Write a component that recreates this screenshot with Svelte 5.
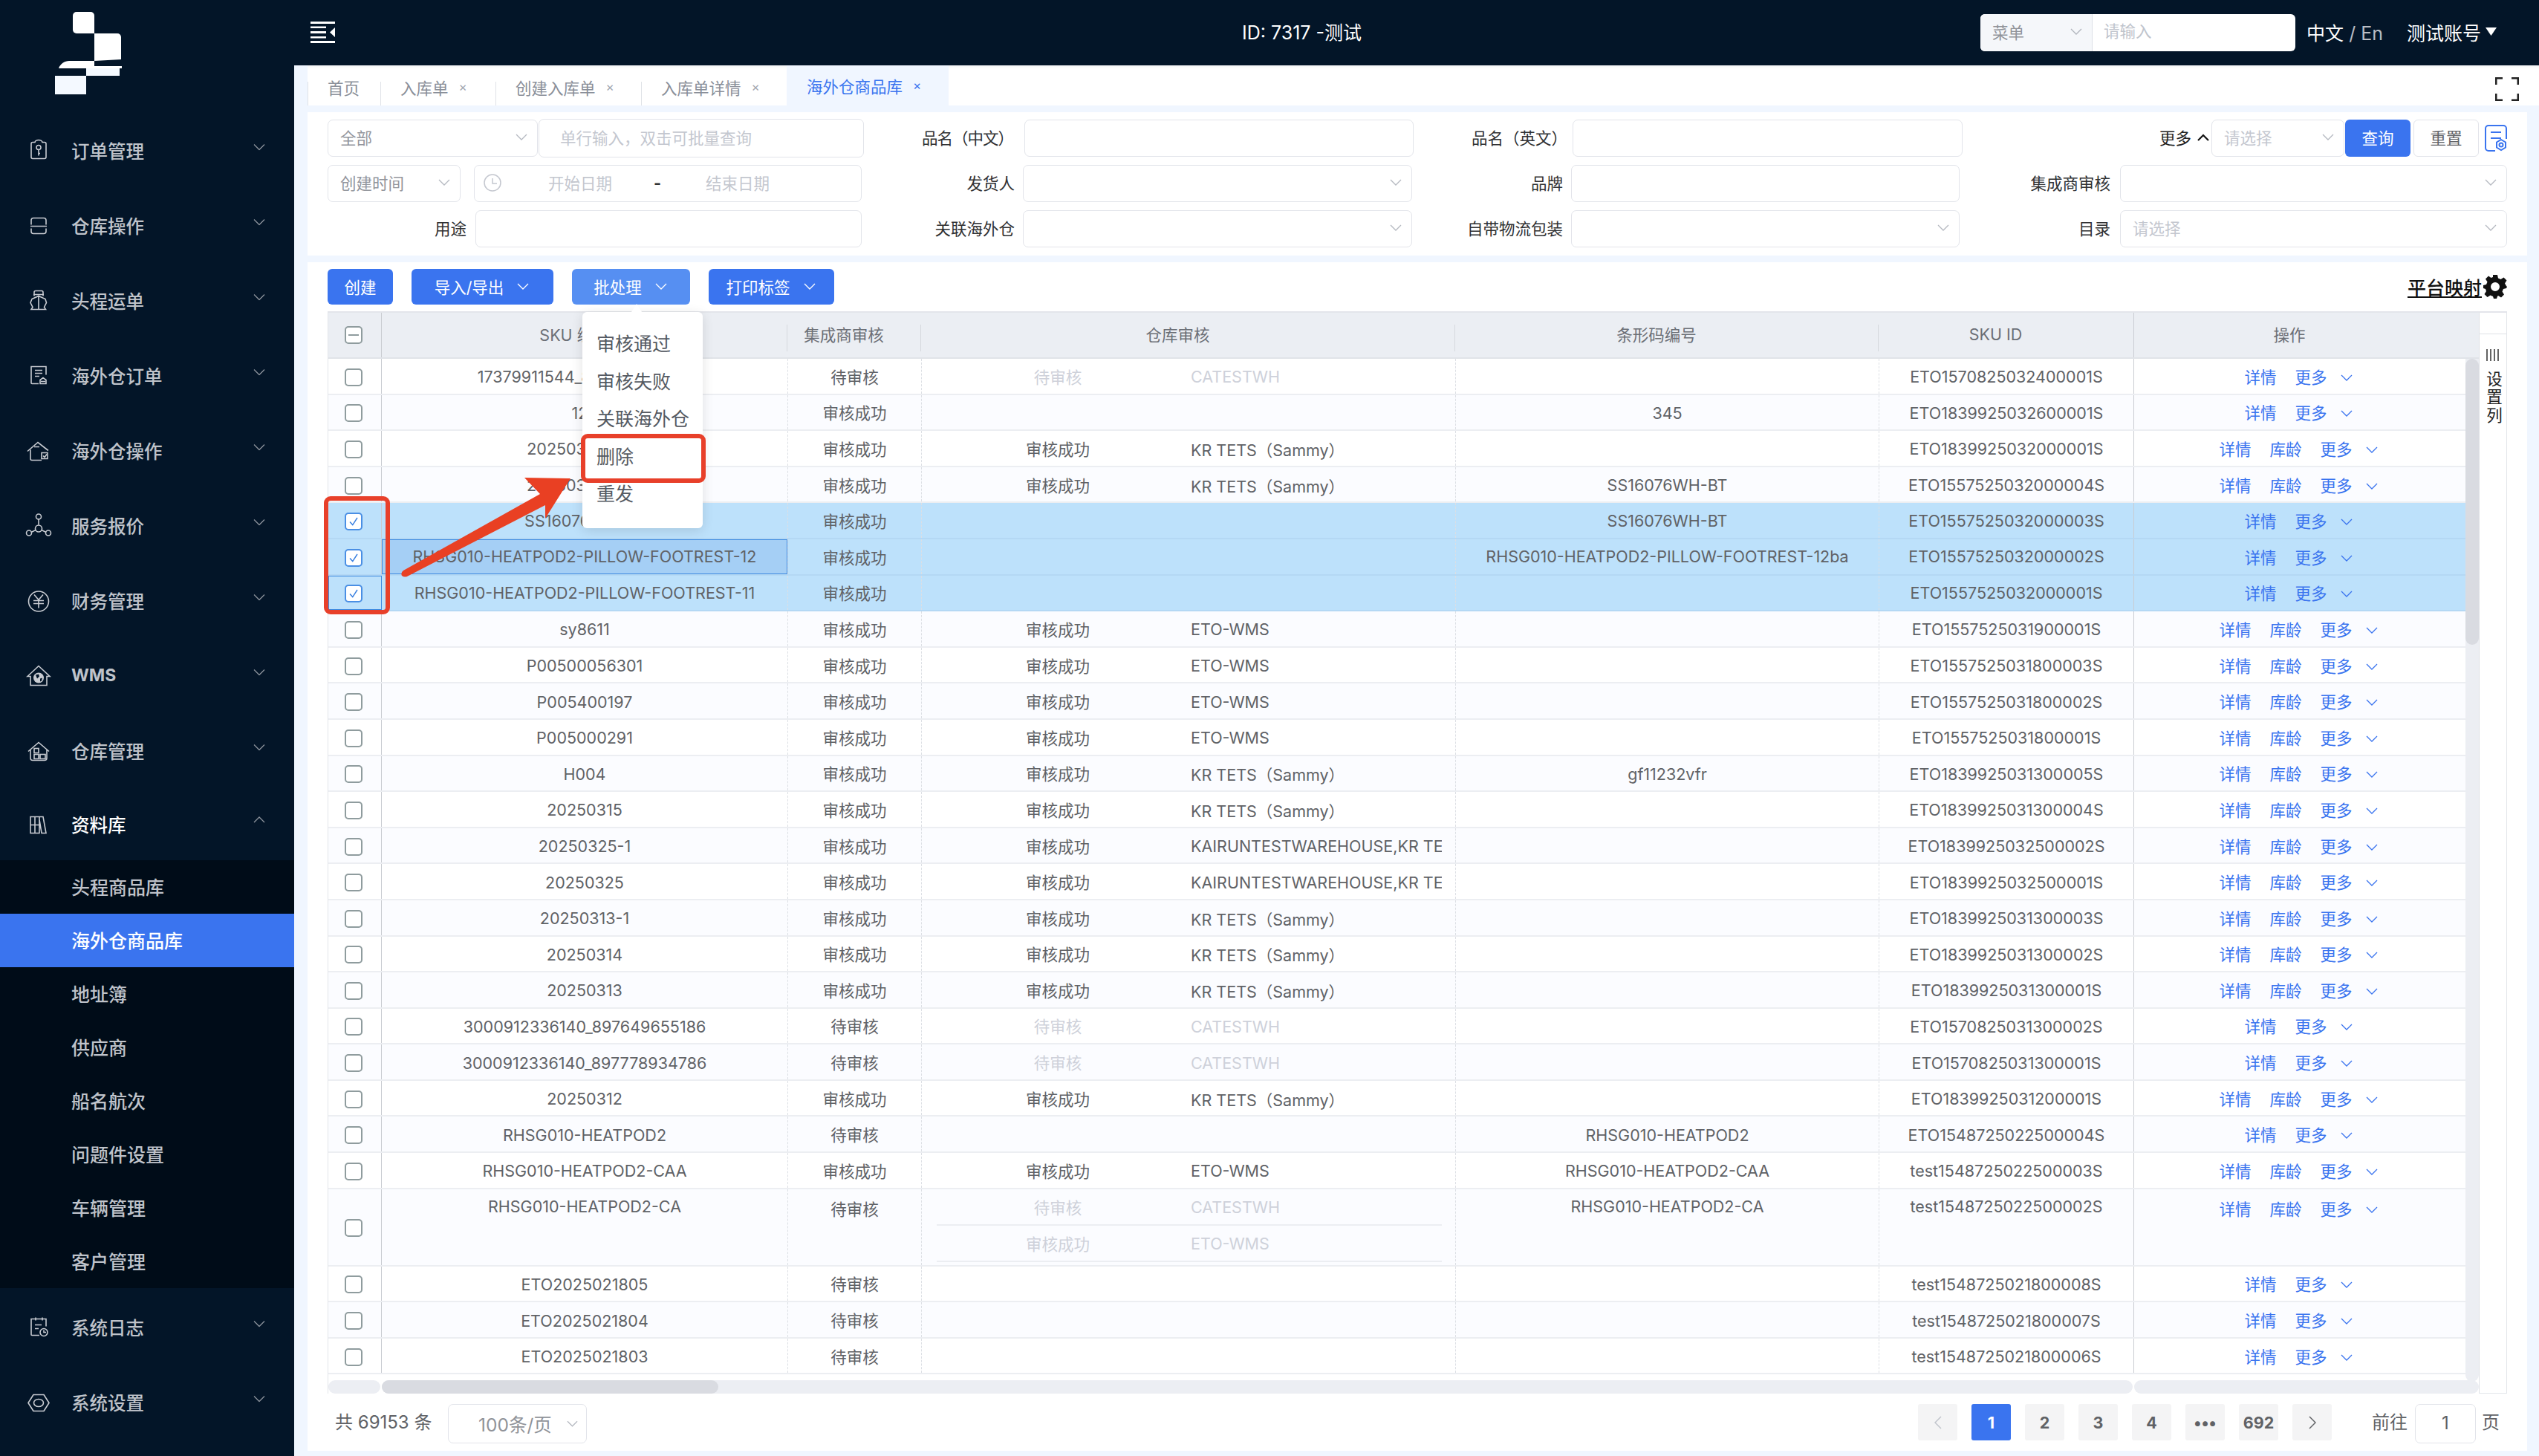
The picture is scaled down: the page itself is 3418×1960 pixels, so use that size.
<script>
  const menuTop = [
    { t: '订单管理', i: 'order' }, { t: '仓库操作', i: 'scan' }, { t: '头程运单', i: 'ship' },
    { t: '海外仓订单', i: 'doc' }, { t: '海外仓操作', i: 'house' }, { t: '服务报价', i: 'net' },
    { t: '财务管理', i: 'yen' }, { t: 'WMS', i: 'globe', bold: true }, { t: '仓库管理', i: 'store' }
  ];
  const subs = ['头程商品库', '海外仓商品库', '地址簿', '供应商', '船名航次', '问题件设置', '车辆管理', '客户管理'];
  const OK = '审核成功', WAIT = '待审核', KR = 'KR TETS（Sammy）', KA = 'KAIRUNTESTWAREHOUSE,KR TETS', E = 'ETO-WMS', C = 'CATESTWH';
  const rows = [
    ['17379911544_80000000000', WAIT, 'w', C, '', 'ETO1570825032400001S', 0],
    ['123', OK, '', '', '345', 'ETO1839925032600001S', 0],
    ['202503260001', OK, OK, KR, '', 'ETO1839925032000001S', 1],
    ['202503200001', OK, OK, KR, 'SS16076WH-BT', 'ETO1557525032000004S', 1],
    ['SS16076WH-BT', OK, '', '', 'SS16076WH-BT', 'ETO1557525032000003S', 0, 's'],
    ['RHSG010-HEATPOD2-PILLOW-FOOTREST-12', OK, '', '', 'RHSG010-HEATPOD2-PILLOW-FOOTREST-12ba', 'ETO1557525032000002S', 0, 's'],
    ['RHSG010-HEATPOD2-PILLOW-FOOTREST-11', OK, '', '', '', 'ETO1557525032000001S', 0, 's'],
    ['sy8611', OK, OK, E, '', 'ETO1557525031900001S', 1],
    ['P00500056301', OK, OK, E, '', 'ETO1557525031800003S', 1],
    ['P005400197', OK, OK, E, '', 'ETO1557525031800002S', 1],
    ['P005000291', OK, OK, E, '', 'ETO1557525031800001S', 1],
    ['H004', OK, OK, KR, 'gf11232vfr', 'ETO1839925031300005S', 1],
    ['20250315', OK, OK, KR, '', 'ETO1839925031300004S', 1],
    ['20250325-1', OK, OK, KA, '', 'ETO1839925032500002S', 1],
    ['20250325', OK, OK, KA, '', 'ETO1839925032500001S', 1],
    ['20250313-1', OK, OK, KR, '', 'ETO1839925031300003S', 1],
    ['20250314', OK, OK, KR, '', 'ETO1839925031300002S', 1],
    ['20250313', OK, OK, KR, '', 'ETO1839925031300001S', 1],
    ['3000912336140_897649655186', WAIT, 'w', C, '', 'ETO1570825031300002S', 0],
    ['3000912336140_897778934786', WAIT, 'w', C, '', 'ETO1570825031300001S', 0],
    ['20250312', OK, OK, KR, '', 'ETO1839925031200001S', 1],
    ['RHSG010-HEATPOD2', WAIT, '', '', 'RHSG010-HEATPOD2', 'ETO1548725022500004S', 0],
    ['RHSG010-HEATPOD2-CAA', OK, OK, E, 'RHSG010-HEATPOD2-CAA', 'test1548725022500003S', 1],
    ['RHSG010-HEATPOD2-CA', WAIT, 'tall', '', 'RHSG010-HEATPOD2-CA', 'test1548725022500002S', 1, 't'],
    ['ETO2025021805', WAIT, '', '', '', 'test1548725021800008S', 0],
    ['ETO2025021804', WAIT, '', '', '', 'test1548725021800007S', 0],
    ['ETO2025021803', WAIT, '', '', '', 'test1548725021800006S', 0]
  ];
  const pages = ['1', '2', '3', '4', '•••', '692'];
</script>

{#snippet chev(cls = '')}
  <svg class="chev {cls}" viewBox="0 0 16 9"><path d="M1 1l7 7 7-7" /></svg>
{/snippet}

{#snippet checkbox(kind = '')}
  <span class="cb {kind}">
    {#if kind === 'on'}<svg viewBox="0 0 24 24"><path d="M6 12.5l4.500 5L18 6" /></svg>{/if}
    {#if kind === 'half'}<i></i>{/if}
  </span>
{/snippet}

{#snippet icon(n)}
  <svg class="mi" viewBox="0 0 48 48">
    {#if n === 'order'}
      <path d="M19 12h-3a2 2 0 0 0-2 2v18a2 2 0 0 0 2 2h16a2 2 0 0 0 2-2V14a2 2 0 0 0-2-2h-3c-1-4-9-4-10 0z" /><circle cx="24" cy="19" r="3" /><path d="M24 22v8M24 27h2" />
    {:else if n === 'scan'}
      <path d="M14 22v-6a3 3 0 0 1 3-3h14a3 3 0 0 1 3 3v6M14 27v4a3 3 0 0 0 3 3h14a3 3 0 0 0 3-3v-4M13 24h22" />
    {:else if n === 'ship'}
      <path d="M18 17v-5a2 2 0 0 1 2-2h8a2 2 0 0 1 2 2v5M15 21l9-4 9 4 1.500 5-3 6 2 3H14l2-3-3-6zM24 17v18M17 15h14" />
    {:else if n === 'doc'}
      <path d="M24 34h-9a1 1 0 0 1-1-1V11h20v11M19 16h10M19 20h10M19 24h6" /><path d="M26 34v-5l4-3 4 3v5zM27 31h6" />
    {:else if n === 'house'}
      <path d="M9 24l14-12 14 11M13 22v12a2 2 0 0 0 2 2h13M18 18h7" /><path d="M28 26h8v8h-8z" /><path d="M30 30l2 2 3-4" />
    {:else if n === 'net'}
      <circle cx="24" cy="11" r="3.500" /><circle cx="24" cy="27" r="4.500" /><circle cx="11" cy="33" r="3.500" /><circle cx="37" cy="33" r="3.500" /><path d="M24 14v8M20 29l-6 3M28 29l6 3" />
    {:else if n === 'yen'}
      <circle cx="24" cy="24" r="13.500" /><path d="M18 15l6 7 6-7M24 22v11M17 23h14M17 27h14" />
    {:else if n === 'globe'}
      <path d="M9 24L24 10l15 14h-4v12H13V24z" /><circle class="solid" cx="24" cy="26" r="7" /><path class="land" d="M20 22l4-1 1 3-3 3zM26 27l3-1-1 4-2 1z" />
    {:else if n === 'store'}
      <path d="M10 24l14-12 14 12M13 22v11a3 3 0 0 0 3 3h16a3 3 0 0 0 3-3V22" /><rect x="18" y="20" width="6" height="6" /><rect x="18" y="28" width="6" height="6" /><rect x="26" y="28" width="7" height="6" />
    {:else if n === 'books'}
      <path d="M13 13h6v22h-6zM19 13h6v22h-6zM13 24h12M25 13h5l4 22h-6l-3-18" />
    {:else if n === 'log'}
      <path d="M25 34H15a1 1 0 0 1-1-1V12h6M20 10v4M29 10v4M20 12h9M29 12h5v10M19 20h9M19 25h5" /><circle cx="31" cy="30" r="5" /><path d="M31 27v3h3" />
    {:else if n === 'gear'}
      <path d="M17 13h14l7 11-7 11H17L10 24z" stroke-linejoin="round" /><ellipse cx="24" cy="24" rx="6.500" ry="5" />
    {/if}
  </svg>
{/snippet}

<div class="app">
  <aside class="side">
    <svg class="logo" viewBox="0 0 396 153">
      <path fill="#fff" d="M98 21a5 5 0 0 1 5-5h19a5 5 0 0 1 5 5v24h-24a5 5 0 0 1-5-5z" />
      <path fill="#fff" d="M127 45h31a5 5 0 0 1 5 5v30l-36 2z" />
      <path fill="#fff" d="M79 92c2-6 8-10 14-10h34v7h37v3z" />
      <path fill="#f4f9ff" d="M116 92h45v10h-45z" />
      <path fill="#f4f9ff" d="M74 102h42v25H74z" />
    </svg>
    <nav>
      {#each menuTop as m}
        <div class="item">
          {@render icon(m.i)}
          <span class:bold={m.bold}>{m.t}</span>
          {@render chev()}
        </div>
      {/each}
      <div class="item open">
        {@render icon('books')}
        <span>资料库</span>
        {@render chev('up')}
      </div>
      <div class="sub">
        {#each subs as s, i}
          <div class="subitem" class:act={i === 1}>{s}</div>
        {/each}
      </div>
      <div class="item after">{@render icon('log')}<span>系统日志</span>{@render chev()}</div>
      <div class="item">{@render icon('gear')}<span>系统设置</span>{@render chev()}</div>
    </nav>
  </aside>

  <div class="main">
    <header class="top">
      <svg class="burger" viewBox="0 0 33 29"><path d="M0 0h33v3H0zM0 13h21v3H0zM0 26h33v3H0zM33 8v13l-7-6.500z" fill="#fff" /><path d="M0 6.500h21v2.500H0zM0 20h21v2.500H0z" fill="#fff" /></svg>
      <div class="title">ID: 7317 -测试</div>
      <div class="topright">
        <div class="search">
          <div class="s-sel"><span>菜单</span>{@render chev()}</div>
          <div class="s-in">请输入</div>
        </div>
        <div class="lang">中文 <em>/ En</em></div>
        <div class="acct">测试账号<svg viewBox="0 0 15 11"><path d="M0 0h15L7.500 11z" /></svg></div>
      </div>
    </header>

    <div class="content">
      <div class="tabs">
        <div class="tab home">首页</div>
        <div class="tab t2">入库单<i>×</i></div>
        <div class="tab t3">创建入库单<i>×</i></div>
        <div class="tab t3">入库单详情<i>×</i></div>
        <div class="tab active">海外仓商品库<i>×</i></div>
        <svg class="fs" viewBox="0 0 32 32"><path d="M1 10V1h9M22 1h9v9M31 22v9h-9M10 31H1v-9" /></svg>
      </div>

      <section class="filters">
        <div class="frow">
          <div class="f w283 val">全部{@render chev()}</div>
          <div class="f w438 ml1 ph tall">单行输入，双击可批量查询</div>
          <label class="l w191 tight">品名（中文）</label>
          <div class="f w524 ml25"></div>
          <label class="l w197 tight loose">品名（英文）</label>
          <div class="f w525 ml17"></div>
          <div class="rightblock">
            <span class="more">更多<svg viewBox="0 0 16 10"><path d="M1 9l7-7 7 7" /></svg></span>
            <div class="f w179 ph">请选择{@render chev()}</div>
            <button class="btn pri">查询</button>
            <button class="btn def">重置</button>
            <svg class="cfg" viewBox="0 0 30 36"><path d="M14 35H5a4 4 0 0 1-4-4V5a4 4 0 0 1 4-4h20a4 4 0 0 1 4 4v14M8 10h14M8 18h14" /><path d="M22 20l6 3.500v7L22 34l-6-3.500v-7z" /><circle cx="22" cy="27" r="2.500" /></svg>
          </div>
        </div>
        <div class="frow">
          <div class="f w179 val">创建时间{@render chev()}</div>
          <div class="f w522 ml18 date">
            <svg class="clock" viewBox="0 0 24 24"><circle cx="12" cy="12" r="11" /><path d="M12 6v7h6" /></svg>
            <span class="d1">开始日期</span><span class="dash">-</span><span class="d2">结束日期</span>
          </div>
          <label class="l w206">发货人</label>
          <div class="f w524 ml11">{@render chev()}</div>
          <label class="l w203">品牌</label>
          <div class="f w523 ml11"></div>
          <label class="l w203">集成商审核</label>
          <div class="f w521 ml13">{@render chev()}</div>
        </div>
        <div class="frow">
          <label class="l w187">用途</label>
          <div class="f w520 ml12"></div>
          <label class="l w206">关联海外仓</label>
          <div class="f w524 ml11">{@render chev()}</div>
          <label class="l w203">自带物流包装</label>
          <div class="f w523 ml11">{@render chev()}</div>
          <label class="l w203">目录</label>
          <div class="f w521 ml13 ph">请选择{@render chev()}</div>
        </div>
      </section>

      <section class="panel">
        <div class="toolbar">
          <button class="tb b1">创建</button>
          <button class="tb b2">导入/导出{@render chev()}</button>
          <button class="tb b3">批处理{@render chev()}</button>
          <button class="tb b4">打印标签{@render chev()}</button>
          <span class="map"><u>平台映射</u>
            <svg viewBox="0 0 32 32"><path fill-rule="evenodd" d="M13 0h6l1 4.500 3.500 1.500 4-2.500 4 4-2.500 4L31 15l1 1v0l-1 2-4 1-1.500 3.500 2.500 4-4 4-4-2.500L19 29l-1 3h-4l-1-3-3.500-1.500-4 2.500-4-4 2.500-4L3 19l-3-1v-4l4-1 1.500-3.500L3 5.500l4-4 3.500 2.500L13 3zM16 10a6 6 0 1 0 0 12 6 6 0 0 0 0-12z" /></svg>
          </span>
        </div>

        <div class="table">
          <div class="tmain">
            <div class="thead">
              <div class="c0 hc">{@render checkbox('half')}</div>
              <div class="hc sep">SKU 编号</div>
              <div class="hc sep">集成商审核</div>
              <div class="hc sep">仓库审核</div>
              <div class="hc sep">条形码编号</div>
              <div class="hc">SKU ID</div>
              <div class="hc c6">操作</div>
            </div>
            <div class="tbody">
              {#each rows as r, i}
                <div class="row" class:alt={i % 2 === 1} class:sel={r[7] === 's'} class:tallrow={r[7] === 't'}>
                  <div class="c0" class:focus={i === 6}>{@render checkbox(r[7] === 's' ? 'on' : '')}</div>
                  <div class="td lat" class:focus={i === 5}>{r[0]}</div>
                  <div class="td dashed">{r[1]}</div>
                  <div class="td dashed wh">
                    {#if r[2] === 'tall'}
                      <div class="sub2"><div class="w-s ghost">待审核</div><div class="w-n ghost">CATESTWH</div></div>
                      <div class="sub2"><div class="w-s ghost">审核成功</div><div class="w-n ghost">ETO-WMS</div></div>
                    {:else if r[2] === 'w'}
                      <div class="w-s ghost">待审核</div><div class="w-n ghost">{r[3]}</div>
                    {:else}
                      <div class="w-s">{r[2]}</div><div class="w-n">{r[3]}</div>
                    {/if}
                  </div>
                  <div class="td dashed lat">{r[4]}</div>
                  <div class="td dashed lat">{r[5]}</div>
                  <div class="td ops">
                    <a href="#d">详情</a>
                    {#if r[6]}<a href="#a">库龄</a>{/if}
                    <a href="#m">更多</a>
                    {@render chev()}
                  </div>
                </div>
              {/each}
            </div>
            <div class="hbar"><span class="h0"></span><span class="h1"><b></b></span><span class="h2"></span></div>
            <div class="vbar"><b></b></div>
          </div>
          <div class="tset">
            <div class="set-top"></div>
            <div class="set-btn">
              <svg viewBox="0 0 18 16"><path d="M1 0v16M6 0v16M11 0v16M16 0v16" /></svg>
              <span>设置列</span>
            </div>
          </div>
        </div>

        <div class="pager">
          <span class="total">共 69153 条</span>
          <div class="size">100条/页{@render chev()}</div>
          <div class="pages">
            <span class="pg dis"><svg viewBox="0 0 10 18"><path d="M9 1L1 9l8 8" /></svg></span>
            {#each pages as p, i}
              <span class="pg" class:cur={i === 0}>{p}</span>
            {/each}
            <span class="pg"><svg viewBox="0 0 10 18"><path d="M1 1l8 8-8 8" /></svg></span>
          </div>
          <span class="goto">前往</span>
          <div class="goin">1</div>
          <span class="gopage">页</span>
        </div>
      </section>
    </div>
  </div>

  <div class="menu">
    <div class="mitem">审核通过</div>
    <div class="mitem">审核失败</div>
    <div class="mitem">关联海外仓</div>
    <div class="mitem">删除</div>
    <div class="mitem">重发</div>
  </div>
  <div class="mark m1"></div>
  <div class="mark m2"></div>
  <svg class="arrow" viewBox="0 0 3418 1960">
    <path d="M543 768L727 665 706 643 768 644 734 698 734 680 550 775Q545 778 541 775Q539 771 543 768z" />
  </svg>
</div>

<style>
  :global(body) { margin: 0; background: #f0f6ff; }
  :global(*) { box-sizing: border-box; }
  .app {
    position: relative; display: flex; width: 3418px; height: 1960px; overflow: hidden;
    font-family: Inter, "Noto Sans CJK SC", sans-serif; font-size: 21.5px; color: #606266;
  }
  .chev { width: 16px; height: 9px; flex: none; fill: none; stroke: #b4b8c0; stroke-width: 1.3; }

  /* sidebar */
  .side { width: 396px; flex: none; background: #031528; color: #bfc3ca; }
  .logo { display: block; width: 396px; height: 153px; }
  .item { height: 101px; display: flex; align-items: center; font-size: 24.5px; position: relative; padding-left: 28px; padding-bottom: 3px; }
  .item span { margin-left: 20px; flex: 1; font-weight: 500; }
  .item .bold { font-weight: 700; font-size: 23px; }
  .item .chev { margin-right: 39px; transform: translateY(-4.500px); stroke: #8d939c; }
  .item .mi { transform: translateY(1.500px); }
  .item .chev.up { transform: translateY(-6px) scaleY(-1); }
  .item.open { height: 96px; color: #fff; padding-bottom: 2px; }
  .item.after { margin-top: 3px; }
  .mi { width: 48px; height: 48px; flex: none; fill: none; stroke: #c9ccd2; stroke-width: 1.6; }
  .mi .solid { fill: #c9ccd2; stroke: none; }
  .mi .land { fill: #031528; stroke: none; }
  .sub { background: #000c18; }
  .subitem { height: 72px; line-height: 74px; padding-left: 96px; font-size: 25px; font-weight: 500; }
  .subitem.act { background: #3a74ef; color: #fff; }

  /* top */
  .main { flex: 1; display: flex; flex-direction: column; min-width: 0; }
  .top { height: 88px; flex: none; background: #031528; display: flex; align-items: center; padding-left: 22px; padding-right: 57px; color: #fff; }
  .burger { width: 33px; height: 29px; flex: none; margin-top: -1px; }
  .title { margin-left: 1221px; font-size: 25px; margin-top: -4px; }
  .topright { margin-left: auto; display: flex; align-items: center; }
  .search { width: 424px; height: 50px; display: flex; background: #fff; border-radius: 6px; overflow: hidden; }
  .s-sel { width: 151px; background: #f5f7fa; border-right: 1px solid #dcdfe6; display: flex; align-items: center; justify-content: space-between; padding: 0 13px 3px 16px; color: #909399; }
  .s-sel .chev { stroke: #b0b4bc; }
  .s-in { padding-left: 15px; line-height: 47px; color: #c0c4cc; }
  .lang { margin-left: 15px; font-size: 25px; margin-top: -3px; }
  .lang em { font-style: normal; color: #b9bdc4; }
  .acct { margin-left: 32px; font-size: 25px; display: flex; align-items: center; margin-top: -3px; }
  .acct svg { width: 15px; height: 11px; margin-left: 6px; fill: #fff; }

  .content { flex: 1; display: flex; flex-direction: column; padding: 0 16px 7px 18px; min-height: 0; }

  /* tabs */
  .tabs { height: 54px; flex: none; margin-right: -16px; background: #fff; display: flex; align-items: flex-end; position: relative; color: #8a8f99; box-shadow: inset 0 6px 6px -6px #e4e6ea; }
  .tab { height: 32px; flex: none; border-left: 1px solid #dfe2e7; display: flex; align-items: center; padding-left: 26px; padding-bottom: 18px; }
  .tab i { font-style: normal; font-size: 17px; margin-left: 14px; color: #a3a7af; }
  .home { width: 98px; }
  .t2 { width: 155px; }
  .t3 { width: 196px; }
  .active { width: 218px; height: 54px; background: #f0f6ff; border-left: 0; color: #3a74ef; padding-left: 27px; padding-top: 12px; padding-bottom: 12px; }
  .active i { color: #3a74ef; }
  .fs { position: absolute; left: 2945px; top: 16px; width: 32px; height: 32px; fill: none; stroke: #222; stroke-width: 3; }

  /* filters */
  .filters { height: 193px; flex: none; margin-top: 9px; background: #fff; padding: 10px 27px 0; display: flex; flex-direction: column; gap: 11px; }
  .frow { height: 50px; display: flex; align-items: center; flex: none; }
  .f { height: 50px; flex: none; border: 1.500px solid #e2e4ea; border-radius: 7px; background: #fff; display: flex; align-items: center; justify-content: space-between; padding: 0 13px 3px 16px; color: #909399; }
  .f .chev { margin-left: auto; }
  .ph { color: #c4c7cf; }
  .tall { height: 52px; padding-left: 28px; }
  .val { color: #93969d; }
  .l { flex: none; text-align: right; color: #303133; padding-bottom: 3px; }
  .tight { letter-spacing: -1px; margin-right: -10px; }
  .tight.loose { letter-spacing: 0; }
  .w179 { width: 179px; } .w187 { width: 187px; } .w191 { width: 191px; } .w197 { width: 197px; }
  .tight.w191 { width: 201px; } .tight.w197 { width: 207px; }
  .w203 { width: 203px; } .w206 { width: 206px; } .w283 { width: 283px; } .w438 { width: 438px; }
  .w520 { width: 520px; } .w521 { width: 521px; } .w522 { width: 522px; } .w523 { width: 523px; }
  .w524 { width: 524px; } .w525 { width: 525px; }
  .ml1 { margin-left: 1px; } .ml11 { margin-left: 11px; } .ml12 { margin-left: 12px; } .ml13 { margin-left: 13px; }
  .ml17 { margin-left: 17px; } .ml18 { margin-left: 18px; } .ml25 { margin-left: 25px; }
  .rightblock { margin-left: auto; display: flex; align-items: center; }
  .more { color: #222; display: flex; align-items: center; margin-right: 3px; padding-bottom: 3px; }
  .more svg { width: 16px; height: 10px; margin-left: 8px; fill: none; stroke: #111; stroke-width: 2.200; }
  .btn { height: 50px; width: 88px; border-radius: 6px; font: inherit; padding: 0 0 3px; }
  .btn.pri { background: #3a74ef; border: 0; color: #fff; margin-left: 1px; }
  .btn.def { background: #fff; border: 1.500px solid #e2e4ea; color: #606266; margin-left: 4px; }
  .cfg { width: 30px; height: 36px; margin-left: 8px; fill: none; stroke: #3a74ef; stroke-width: 2; }
  .date { padding-left: 12px; justify-content: flex-start; color: #c4c7cf; }
  .clock { width: 24px; height: 24px; fill: none; stroke: #c4c7cf; stroke-width: 1.500; flex: none; }
  .d1 { margin-left: 63px; }
  .dash { margin-left: 56px; color: #333; font-weight: 700; }
  .d2 { margin-left: 60px; }

  /* panel */
  .panel { flex: 1; margin-top: 9px; background: #fff; padding: 9px 27px 0; display: flex; flex-direction: column; min-height: 0; }
  .toolbar { height: 48px; flex: none; display: flex; align-items: center; position: relative; }
  .tb { height: 48px; border: 0; border-radius: 6px; background: #3a74ef; color: #fff; font: inherit; display: flex; align-items: center; justify-content: center; padding: 0 0 2px; flex: none; }
  .tb .chev { margin-left: 18px; stroke: #fff; }
  .b2, .b3, .b4 { padding-right: 2px; }
  .b1 { width: 88px; } .b2 { width: 191px; margin-left: 25px; }
  .b3 { width: 159px; margin-left: 25px; background: #568ff2; } .b4 { width: 169px; margin-left: 25px; }
  .map { margin-left: auto; display: flex; align-items: center; color: #111; font-size: 25px; font-weight: 500; }
  .map svg { width: 32px; height: 32px; margin-left: 2px; fill: #111; }

  .table { margin-top: 9px; height: 1457px; flex: none; display: flex; border: 1px solid #e3e5ea; border-top-width: 2px; }
  .tmain { width: 2895px; flex: none; position: relative; }
  .thead, .row { display: grid; grid-template-columns: 72px 546px 180px 719px 570px 343px 465px; }
  .thead { height: 62px; background: #ebeef3; border-bottom: 2px solid #e0e3e8; }
  .hc { display: flex; align-items: center; justify-content: center; padding: 0 28px 3px 0; color: #6b6f76; position: relative; }
  .c0.hc { padding: 0 4px 0 0; border-right: 1px solid #c9ccd2; }
  .sep::after { content: ''; position: absolute; right: 0; top: 16px; bottom: 8px; border-right: 1px solid #d5d8dd; }
  .hc.c6 { padding-right: 46px; border-left: 1px solid #c9ccd2; }
  .tbody { height: 1375px; overflow: hidden; }
  .row { height: 48.6px; border-bottom: 2px solid #eceef2; background: #fff; }
  .row.alt { background: #fbfcff; }
  .row.sel { background: #bde1fb; border-bottom-color: #b4d8f4; }
  .row.tallrow { height: 104px; }
  .c0 { display: flex; align-items: center; justify-content: center; border-right: 1px solid #c9ccd2; padding: 3px 4px 0 0; }
  .td { display: flex; align-items: center; justify-content: center; white-space: nowrap; min-width: 0; overflow: hidden; }
  .lat { padding-top: 2px; }
  .row.sel .lat { padding-top: 0; }
  .dashed { border-left: 1px dashed #dcdfe4; }
  .tallrow .td { align-items: flex-start; padding-top: 10px; }
  .focus { background: #a5cff5; outline: 1px solid #3f8ae0; outline-offset: -1px; }
  .c0.focus { background: #bde1fb; }
  .wh { justify-content: flex-start; padding: 0 18px 0 20px; }
  .tallrow .wh { flex-direction: column; padding-top: 0; }
  .sub2 { display: flex; width: 100%; height: 49px; align-items: center; border-bottom: 2px solid #eceef2; flex: none; }
  .w-s { width: 326px; flex: none; text-align: center; }
  .w-n { padding: 2px 0 0 16px; white-space: nowrap; overflow: hidden; flex: 1; min-width: 0; }
  .ghost { color: #ced1da; }
  .ops { border-left: 1px solid #c9ccd2; padding-right: 22px; gap: 25px; }
  .ops a { color: #3a74ef; text-decoration: none; }
  .ops .chev { margin-left: -7px; stroke: #3a74ef; transform: translateY(2px); }
  .tallrow .ops .chev { margin-top: 11px; }
  .cb { width: 24px; height: 24px; flex: none; border: 2px solid #8f9c9e; border-radius: 5px; background: #fff; display: flex; align-items: center; justify-content: center; }
  .cb.on { border-color: #4a8fe4; }
  .cb svg { width: 22px; height: 22px; fill: none; stroke: #3a80e0; stroke-width: 1.800; }
  .cb i { width: 14px; height: 2px; background: #8f9c9e; }
  .hbar { height: 18px; display: flex; background: #fff; }
  .hbar span { background: #eceef3; border-radius: 9px; height: 18px; display: block; }
  .h0 { width: 70px; margin-right: 2px; }
  .h1 { width: 2357px; margin-right: 2px; }
  .h1 b { display: block; width: 453px; height: 18px; background: #d9dbe1; border-radius: 9px; }
  .h2 { flex: 1; }
  .vbar { position: absolute; right: 0; top: 62px; width: 18px; height: 1377px; background: #eceef3; border-radius: 0 0 9px 9px; }
  .vbar b { display: block; height: 385px; background: #d9dbe1; border-radius: 9px; }
  .tset { flex: 1; border-left: 1px solid #dfe1e6; color: #222; }
  .set-top { height: 29px; border-bottom: 1.500px solid #dfe1e6; }
  .set-btn { display: flex; flex-direction: column; align-items: center; padding-top: 20px; }
  .set-btn svg { width: 18px; height: 16px; fill: none; stroke: #222; stroke-width: 1.400; }
  .set-btn span { writing-mode: vertical-rl; margin-top: 13px; line-height: 21px; letter-spacing: 3px; }

  .pager { flex: 1; display: flex; align-items: flex-start; padding-top: 14px; position: relative; font-size: 24px; }
  .total { margin-left: 10px; line-height: 50px; width: 152px; flex: none; white-space: nowrap; }
  .size { width: 187px; height: 53px; flex: none; border: 1.500px solid #e2e4ea; border-radius: 7px; display: flex; align-items: center; padding-left: 40px; color: #909399; white-space: nowrap; font-size: 24.5px; }
  .size .chev { margin-left: 20px; width: 15px; }
  .pages { margin-left: auto; display: flex; gap: 19px; font-size: 21.5px; }
  .pg { width: 53px; height: 49px; background: #f4f4f5; border-radius: 3px; display: flex; align-items: center; justify-content: center; font-weight: 700; color: #606266; }
  .pg.cur { background: #3a74ef; color: #fff; }
  .pg svg { width: 10px; height: 18px; fill: none; stroke: #606266; stroke-width: 1.500; }
  .pg.dis svg { stroke: #c0c4cc; }
  .goto { margin-left: 54px; line-height: 50px; flex: none; }
  .goin { margin-left: 10px; width: 82px; height: 53px; flex: none; border: 1.500px solid #e2e4ea; border-radius: 7px; text-align: center; line-height: 50px; }
  .gopage { margin-left: 8px; margin-right: 10px; line-height: 50px; flex: none; }

  /* overlays */
  .menu { position: absolute; left: 784px; top: 420px; width: 162px; height: 291px; background: #fff; border-radius: 6px; box-shadow: 0 3px 16px rgba(0,0,0,.12); padding-top: 16px; color: #555a62; font-size: 25px; }
  .menu::before { content: ''; position: absolute; left: 66px; top: -11px; border: 7px solid transparent; border-top: 0; border-bottom: 11px solid #fff; }
  .mitem { height: 50.500px; padding-left: 19px; display: flex; align-items: center; }
  .mark { position: absolute; border: 6px solid #e8402a; border-radius: 9px; }
  .m1 { left: 436px; top: 668px; width: 89px; height: 159px; }
  .m2 { left: 782px; top: 584px; width: 168px; height: 66px; }
  .arrow { position: absolute; left: 0; top: 0; width: 3418px; height: 1960px; pointer-events: none; }
  .arrow path { fill: #e94023; }
</style>
